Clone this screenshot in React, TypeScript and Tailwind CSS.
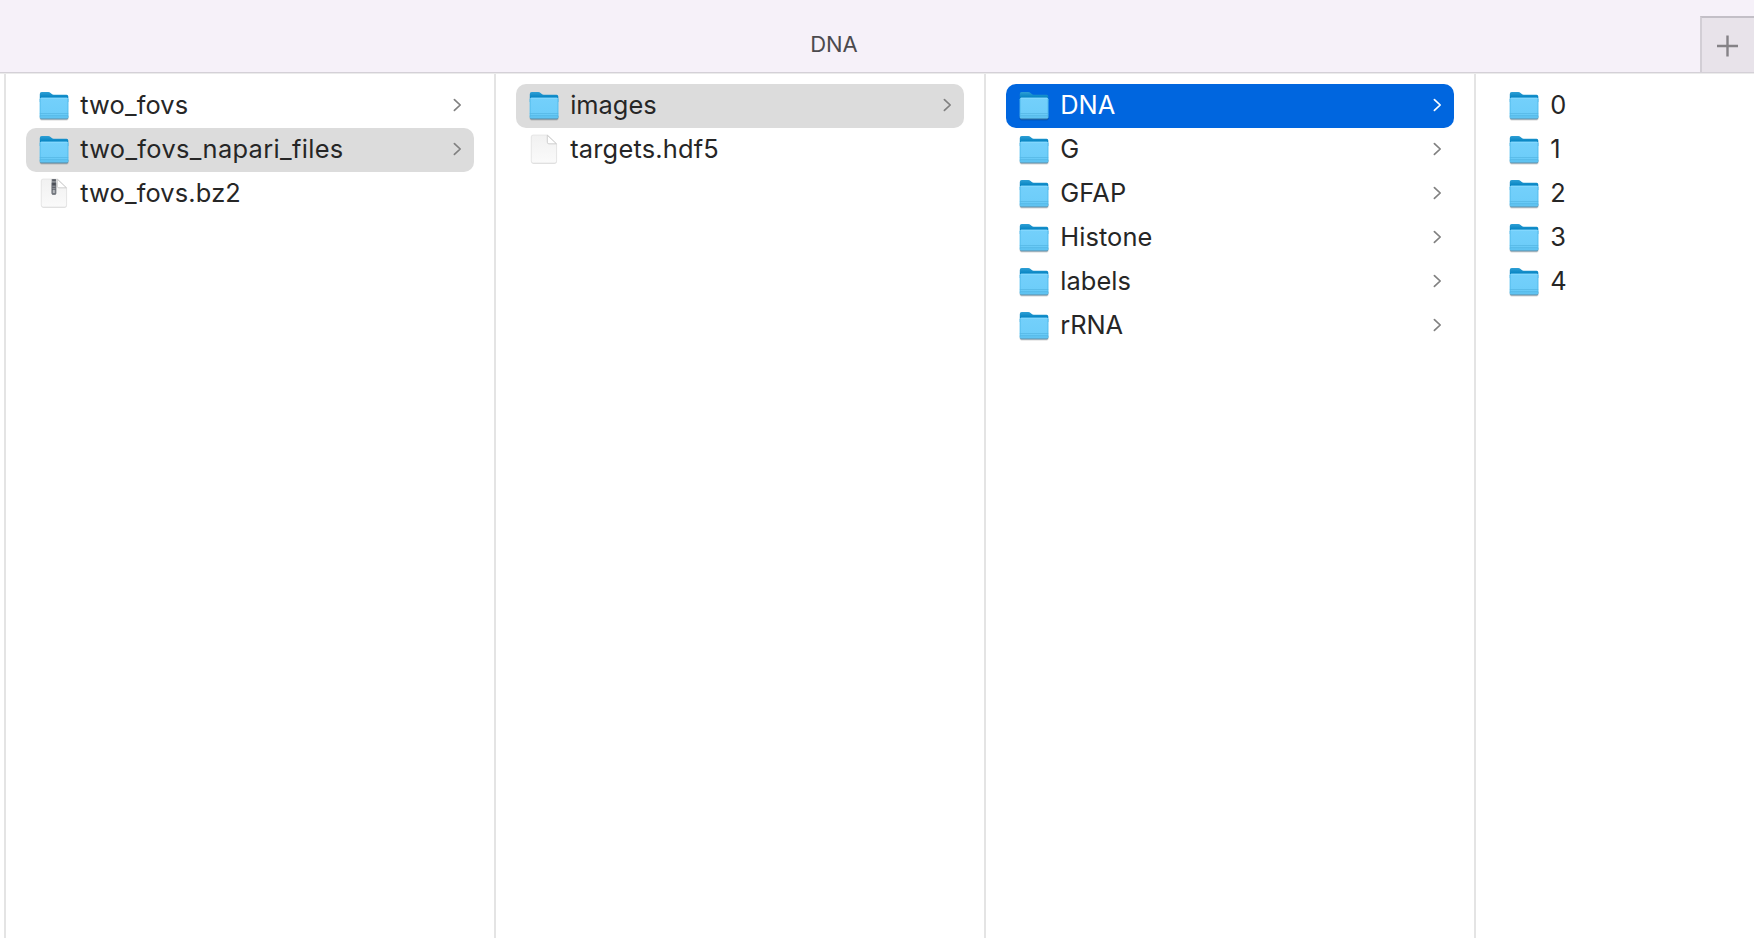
type Kind = "folder" | "file" | "zip";
type Entry = { name: string; kind: Kind; state?: "path" | "active"; tracking?: string };

const columns: Entry[][] = [
  [
    { name: "two_fovs", kind: "folder", tracking: "tracking-[0.16px]" },
    { name: "two_fovs_napari_files", kind: "folder", state: "path", tracking: "tracking-[0.34px]" },
    { name: "two_fovs.bz2", kind: "zip", tracking: "tracking-[0.16px]" },
  ],
  [
    { name: "images", kind: "folder", state: "path" },
    { name: "targets.hdf5", kind: "file", tracking: "tracking-[0.2px]" },
  ],
  [
    { name: "DNA", kind: "folder", state: "active" },
    { name: "G", kind: "folder" },
    { name: "GFAP", kind: "folder", tracking: "tracking-[0.2px]" },
    { name: "Histone", kind: "folder", tracking: "tracking-[0.1px]" },
    { name: "labels", kind: "folder", tracking: "tracking-[0.1px]" },
    { name: "rRNA", kind: "folder" },
  ],
  [
    { name: "0", kind: "folder" },
    { name: "1", kind: "folder" },
    { name: "2", kind: "folder" },
    { name: "3", kind: "folder" },
    { name: "4", kind: "folder" },
  ],
];

function FolderIcon() {
  return (
    <svg width="32" height="32" viewBox="0 0 32 32" className="shrink-0">
      <path d="M1.6 26V28.8Q1.8 30.4 3.4 30.4H28.8Q30.4 30.4 30.6 28.8V26Z" fill="#000" opacity=".16" />
      <path d="M2 26V28Q2 29.4 3.4 29.4H28.8Q30.2 29.4 30.2 28V26Z" fill="#3d7796" opacity=".75" />
      <path d="M1.8 4Q1.8 2.1 3.7 2.1H10.2Q11.6 2.1 12.6 3L13.8 4.1Q14.5 4.8 15.6 4.8H28.6Q30.3 4.8 30.3 6.5V12H1.8Z" fill="url(#tab)" />
      <path d="M1.8 9.2Q1.8 7.7 3.3 7.7H28.8Q30.3 7.7 30.3 9.2V27.2Q30.3 28.6 28.9 28.6H3.2Q1.8 28.6 1.8 27.2Z" fill="url(#front)" />
      <path d="M2.8 8.2H29.4" stroke="#8bdcff" strokeWidth=".9" />
      <path d="M1.8 23.5H30.3M1.8 25.7H30.3" stroke="#46a9d9" strokeWidth=".7" opacity=".65" />
      <path d="M2.2 9V27.4M29.9 9V27.4" stroke="#4db9eb" strokeWidth=".7" />
    </svg>
  );
}

function DocumentIcon({ zip }: { zip: boolean }) {
  return (
    <svg width="32" height="32" viewBox="0 0 32 32" className="shrink-0">
      <path d="M3.3 3.2Q3.3 1.3 5.2 1.3H19.6L28.7 10.4V27.8Q28.7 29.8 26.7 29.8H5.3Q3.3 29.8 3.3 27.8Z" fill="#b9b9b9" opacity=".55" />
      <path d="M3.2 3Q3.2 1 5.2 1H19.7L28.6 9.6V27Q28.6 29 26.6 29H5.2Q3.2 29 3.2 27Z" fill="url(#paper)" stroke="#dedede" strokeWidth=".6" />
      <path d="M19.3 1.3V8.2Q19.3 9.8 20.9 9.8H28.4Z" fill="#fff" stroke="#c4c4c4" strokeWidth=".8" strokeLinejoin="round" />
      {zip && (
        <>
          <path d="M13.6 1H18.2V15.2Q18.2 16.8 16.6 16.8H15.2Q13.6 16.8 13.6 15.2Z" fill="#8b8f95" />
          <path d="M14.2 1.4H17.8V2.8H14.2ZM14 4.8H18V7.4H14Z" fill="#4b4f57" />
          <path d="M14.1 9.4H17.7M14.1 11.6H17.7M14.1 16H17.7" stroke="#5d6168" strokeWidth="1" />
          <path d="M14 4.8V15.6M17.8 4.8V15.6" stroke="#62666d" strokeWidth=".7" />
          <path d="M15.9 11.8V15" stroke="#c3c6ca" strokeWidth="1.3" />
        </>
      )}
    </svg>
  );
}

function Chevron() {
  return (
    <svg width="10" height="16" viewBox="0 0 10 16" fill="none" stroke="currentColor" strokeWidth="1.7" strokeLinecap="round" strokeLinejoin="round" className="block shrink-0">
      <path d="M2.4 2.6L8.2 8L2.4 13.4" />
    </svg>
  );
}

function Row({ entry }: { entry: Entry }) {
  const tone =
    entry.state === "active"
      ? "bg-[#0066df] text-white"
      : entry.state === "path"
        ? "bg-[#dcdcdc] text-[#262626]"
        : "text-[#262626]";
  return (
    <li className={`flex h-11 items-center rounded-[10px] pr-3 pl-3 ${tone}`}>
      {entry.kind === "folder" ? <FolderIcon /> : <DocumentIcon zip={entry.kind === "zip"} />}
      <span className={`ml-[10.2px] grow pb-0.5 text-[25.4px] leading-8 font-[430] whitespace-nowrap ${entry.tracking ?? ""}`}>{entry.name}</span>
      {entry.kind === "folder" && (
        <span className={`pb-0.5 ${entry.state === "active" ? "text-white" : "text-[#808080]"}`}>
          <Chevron />
        </span>
      )}
    </li>
  );
}

export default function App() {
  return (
    <div className="flex h-[938px] w-[1754px] flex-col overflow-hidden bg-white font-['Inter',sans-serif]">
      <svg width="0" height="0" className="absolute">
        <defs>
          <linearGradient id="tab" x1="0" y1="0" x2="0" y2="1">
            <stop offset="0" stopColor="#2d9fd5" />
            <stop offset=".55" stopColor="#0583c2" />
            <stop offset="1" stopColor="#0583c2" />
          </linearGradient>
          <linearGradient id="front" x1="0" y1="0" x2="0" y2="1">
            <stop offset="0" stopColor="#74d0fb" />
            <stop offset=".75" stopColor="#6dcdf9" />
            <stop offset="1" stopColor="#5cc1f0" />
          </linearGradient>
          <linearGradient id="paper" x1="0" y1="0" x2="0" y2="1">
            <stop offset="0" stopColor="#f1f1f1" />
            <stop offset="1" stopColor="#fafafa" />
          </linearGradient>
        </defs>
      </svg>
      <header className="flex h-[74px] shrink-0 items-end border-b border-[#ebebeb] bg-[#f6f1f9]">
        <div className="flex h-full grow items-end border-b border-[#d4d0d7]">
          <h1 className="h-14 w-[1700px] pt-3 pr-8 text-center text-[22px] leading-8 font-[430] text-[#4c4a4e]">DNA</h1>
          <button className="flex h-14 w-[54px] shrink-0 items-center border-t-2 border-l-2 border-t-[#c3bfc7] border-l-[#d2ced5] bg-[#e8e3ea] pt-px pl-3.5 text-[#858287]">
            <svg width="22" height="22" viewBox="0 0 22 22" stroke="currentColor" strokeWidth="2.4">
              <path d="M11.5 .5V21.5M1 11H22" />
            </svg>
          </button>
        </div>
      </header>
      <main className="flex grow pl-1">
        {columns.map((entries, i) => (
          <ul key={i} className="w-[490px] shrink-0 border-l-2 border-[#e4e4e4] pt-2.5 pr-5 pl-5">
            {entries.map((entry) => (
              <Row key={entry.name} entry={entry} />
            ))}
          </ul>
        ))}
      </main>
    </div>
  );
}
